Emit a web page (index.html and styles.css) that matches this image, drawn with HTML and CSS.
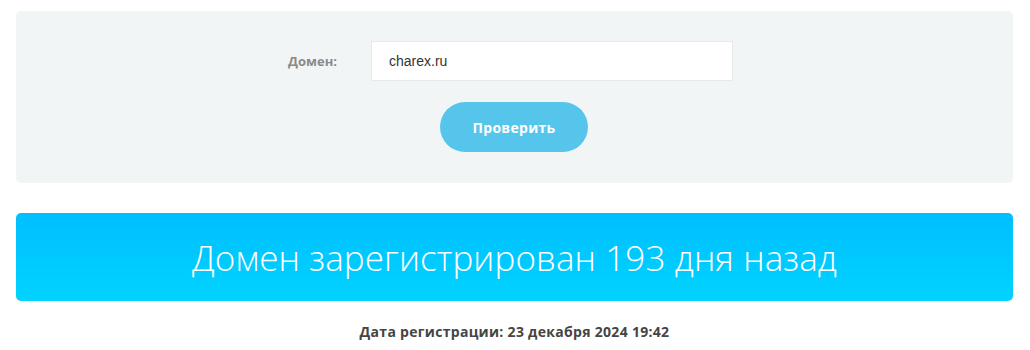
FILE: index.html
```html
<!DOCTYPE html>
<html lang="ru">
<head>
<meta charset="utf-8">
<title>Проверка домена</title>
<link rel="stylesheet" href="styles.css">
</head>
<body>
<div class="page">
  <form class="panel">
    <div class="row">
      <label class="label" for="domain">Домен:</label>
      <input class="input" id="domain" type="text" value="charex.ru">
    </div>
    <div class="actions">
      <button class="btn" type="button">Проверить</button>
    </div>
  </form>
  <div class="banner">Домен зарегистрирован 193 дня назад</div>
  <p class="date">Дата регистрации: 23 декабря 2024 19:42</p>
</div>
</body>
</html>
```
FILE: styles.css
```css
html, body {
  margin: 0;
  padding: 0;
  background: #ffffff;
}
body {
  font-family: "Open Sans", "Noto Sans", sans-serif;
}
.page {
  width: 997px;
  margin-left: 16px;
  padding-top: 11px;
}
.panel {
  background: #f2f5f6;
  border-radius: 5px;
  padding: 30px 0 31px;
  display: flex;
  flex-direction: column;
  gap: 21px;
}
.row {
  display: grid;
  grid-template-columns: 321px 362px 1fr;
  column-gap: 34px;
  align-items: center;
}
.label {
  text-align: right;
  font-size: 13px;
  font-weight: 700;
  color: #8a8a8a;
}
.input {
  box-sizing: border-box;
  height: 40px;
  width: 362px;
  border: 1px solid #e6eaec;
  background: #ffffff;
  padding: 0 17px;
  font-family: "Liberation Sans", Arial, sans-serif;
  font-size: 14px;
  color: #333333;
  outline: none;
}
.actions {
  display: flex;
  justify-content: center;
  padding-right: 1px;
}
.btn {
  width: 148px;
  height: 50px;
  border: none;
  border-radius: 25px;
  background: #56c5ec;
  color: #ffffff;
  font-family: "Open Sans", "Noto Sans", sans-serif;
  font-size: 14px;
  font-weight: 700;
  letter-spacing: 0.3px;
  cursor: pointer;
}
.banner {
  margin-top: 30px;
  height: 88px;
  border-radius: 5px;
  background: linear-gradient(180deg, #00bfff 0%, #00d3ff 100%);
  color: #ffffff;
  display: flex;
  align-items: center;
  justify-content: center;
  font-size: 35px;
  font-weight: 300;
  letter-spacing: 0.1px;
}
.date {
  margin: 21px 0 0;
  text-align: center;
  font-size: 14px;
  font-weight: 700;
  letter-spacing: 0.3px;
  color: #454545;
}
```
